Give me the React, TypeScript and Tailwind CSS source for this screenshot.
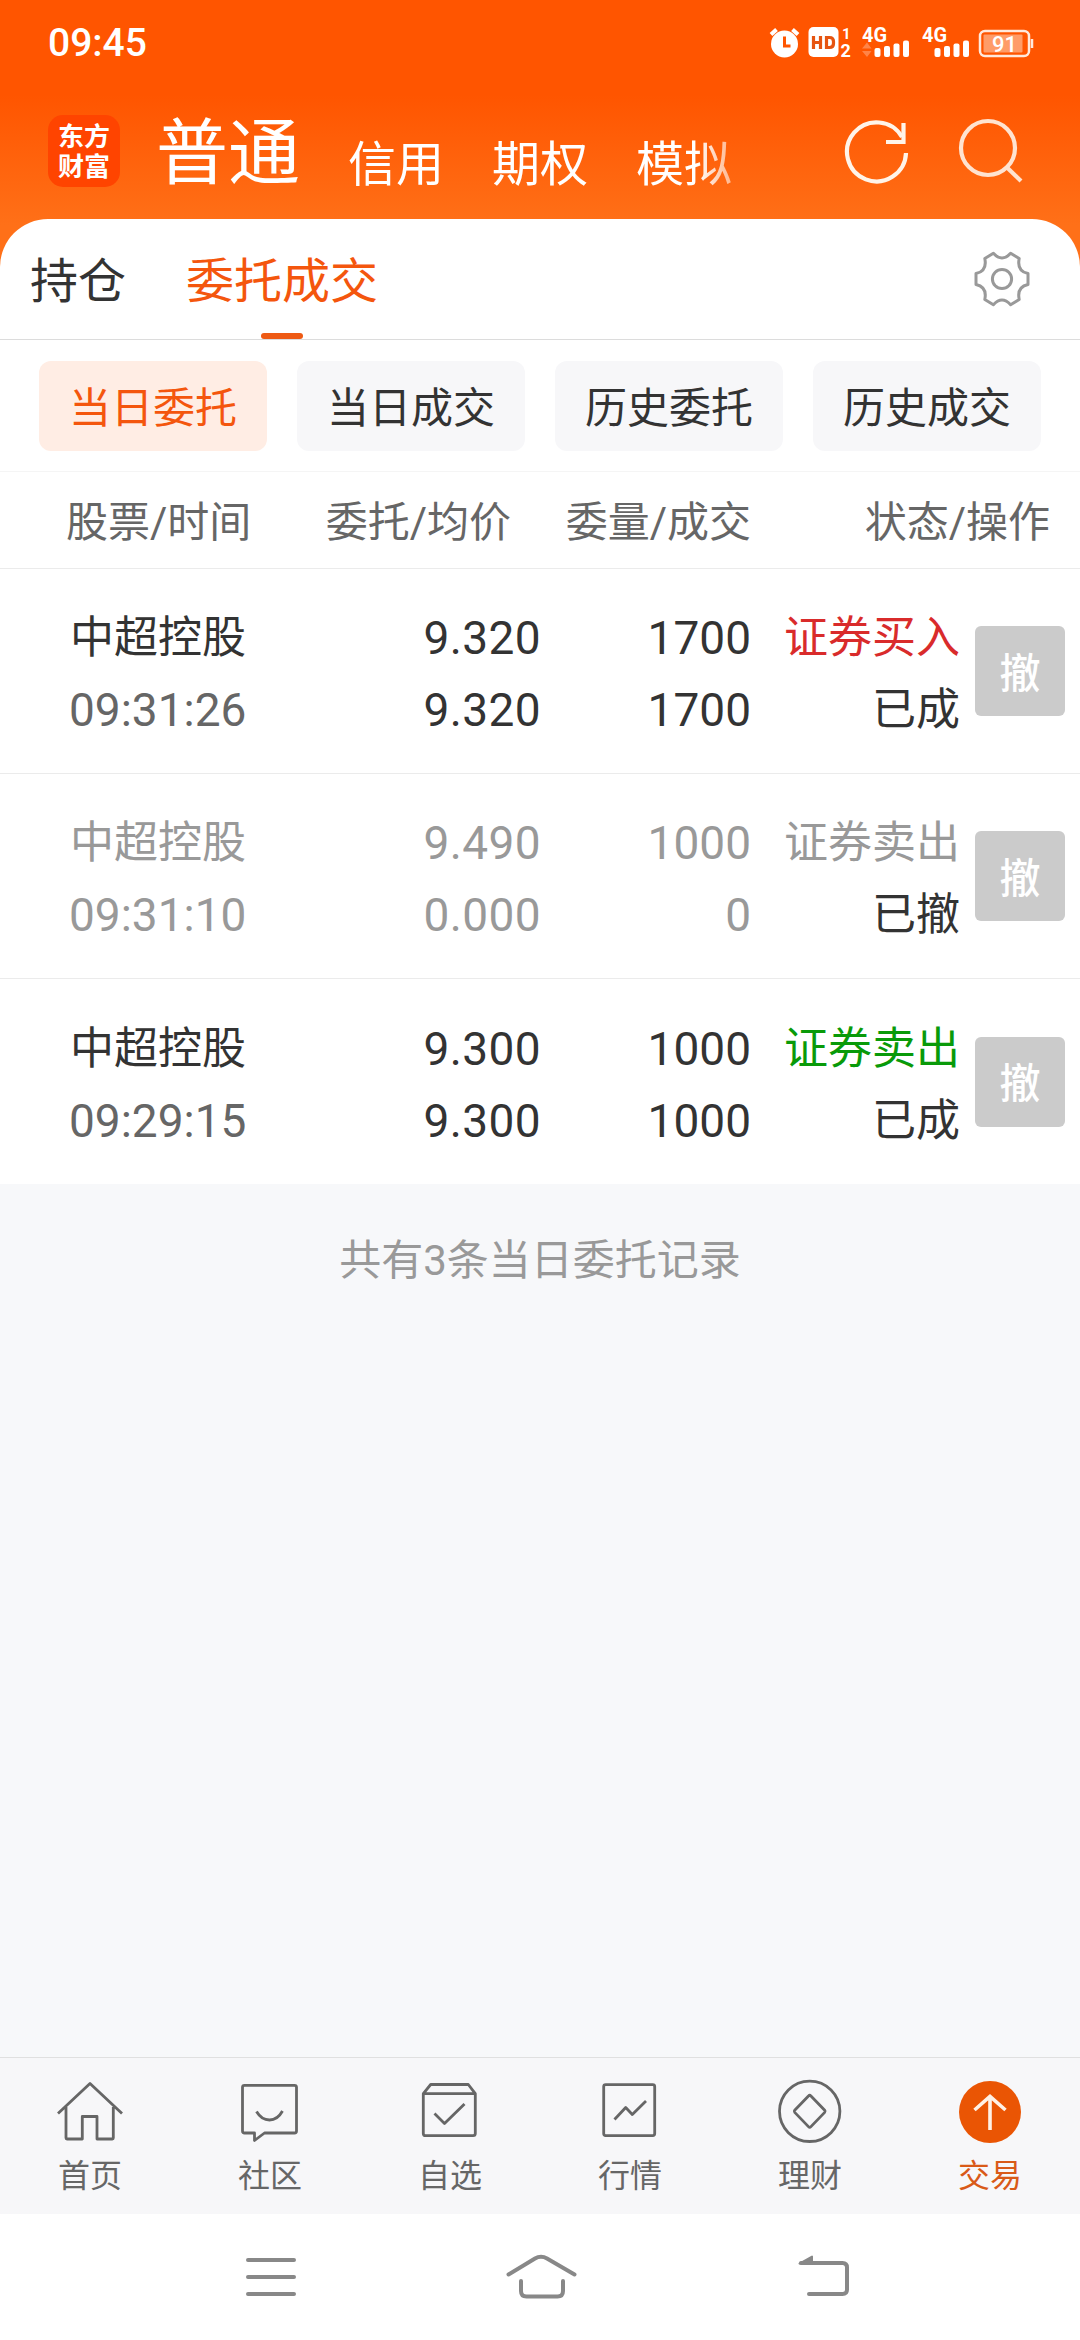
import {useState} from 'react';
import type {ReactNode} from 'react';

type Order = {
  name: string;
  time: string;
  price: string;
  avgPrice: string;
  amount: string;
  filled: string;
  side: string;
  sideColor: string;
  status: string;
  cancelled?: boolean;
};

const accounts = ['普通', '信用', '期权', '模拟'];
const filters = ['当日委托', '当日成交', '历史委托', '历史成交'];

const orders: Order[] = [
  {name: '中超控股', time: '09:31:26', price: '9.320', avgPrice: '9.320', amount: '1700', filled: '1700', side: '证券买入', sideColor: 'text-[#d92b2b]', status: '已成'},
  {name: '中超控股', time: '09:31:10', price: '9.490', avgPrice: '0.000', amount: '1000', filled: '0', side: '证券卖出', sideColor: 'text-[#999999]', status: '已撤', cancelled: true},
  {name: '中超控股', time: '09:29:15', price: '9.300', avgPrice: '9.300', amount: '1000', filled: '1000', side: '证券卖出', sideColor: 'text-[#099a09]', status: '已成'}
];

function Signal({roaming}: {roaming?: boolean}) {
  return (
    <svg viewBox="0 0 48 36" className="h-9 w-12" fill="#fff">
      <text x="0" y="18" fontSize="20" fontWeight="700" fontFamily="Roboto, sans-serif" textLength="25" lengthAdjust="spacingAndGlyphs">
        4G
      </text>
      {roaming ? <path d="M0 24.500 5 18.500l4.500 6zM0 27h9.500L5 33z" opacity="0.28" /> : null}
      <rect x="12.500" y="24" width="6" height="9" rx="2" />
      <rect x="22" y="22" width="6" height="11" rx="2" />
      <rect x="31.500" y="19.500" width="6" height="13.500" rx="2" />
      <rect x="41" y="16.500" width="6" height="16.500" rx="2" />
    </svg>
  );
}

function StatusBar() {
  return (
    <div className="flex h-[84px] items-center justify-between pl-12 pr-[46px]">
      <span className="pt-0.5 text-[39px] font-medium leading-none">09:45</span>
      <div className="flex items-center">
        <svg viewBox="0 0 32 32" className="mr-2 h-8 w-8">
          <circle cx="16.500" cy="18" r="13.500" fill="#fff" />
          <path d="M3 8.500 8.500 3.500M24.500 3.500l5.500 5" stroke="#fff" strokeWidth="4" />
          <path d="M16.500 10.500v9.500H22.500" stroke="#ff5500" strokeWidth="3" fill="none" />
        </svg>
        <svg viewBox="0 0 46 40" className="mr-2 h-10 w-[46px]">
          <rect x="0.500" y="5" width="30" height="30" rx="5" fill="#fff" />
          <path d="M5.500 14v13M12.500 14v13M5.500 20.500h7M18.500 15.500h3q4 0 4 4v2q0 4-4 4h-3z" stroke="#e65410" strokeWidth="3.200" fill="none" />
          <text x="34" y="16.500" fontSize="15" fontWeight="700" fontFamily="Roboto, sans-serif" fill="#fff">
            1
          </text>
          <text x="32.500" y="34.500" fontSize="18" fontWeight="700" fontFamily="Roboto, sans-serif" fill="#fff">
            2
          </text>
        </svg>
        <div className="mr-3 flex">
          <Signal roaming />
        </div>
        <div className="mr-2 flex">
          <Signal />
        </div>
        <svg viewBox="0 0 56 32" className="h-8 w-14">
          <rect x="2" y="5" width="49" height="25" rx="5" stroke="#ffe9dc" strokeWidth="2.500" fill="none" />
          <rect x="5.500" y="8.500" width="39" height="18" rx="1" fill="#ff9c68" />
          <path d="M54 13v9" stroke="#ffe9dc" strokeWidth="2.500" />
          <text x="26.500" y="25.500" fontSize="22" fontWeight="500" textAnchor="middle" fontFamily="Roboto, sans-serif" fill="#fff">
            91
          </text>
        </svg>
      </div>
    </div>
  );
}

function AccountBar() {
  return (
    <div className="flex h-[135px] items-start pl-12 pr-[55px] pt-[31px]">
      <div className="flex h-[72px] w-[72px] flex-col items-center justify-center rounded-[15px] bg-[#ff4400] pt-0.5 text-[26px] font-bold leading-[30px]">
        <span>东方</span>
        <span>财富</span>
      </div>
      <div className="ml-9 flex h-[84px] w-[640px] items-start gap-12 whitespace-nowrap text-5xl [mask-image:linear-gradient(to_right,#000_540px,transparent_615px)]">
        {accounts.map((account, index) => (
          <span key={account} className={index === 0 ? 'pt-[3px] text-[72px] leading-[72px]' : 'pt-5 leading-[60px]'}>
            {account}
          </span>
        ))}
      </div>
      <svg viewBox="0 0 72 72" className="ml-auto h-[72px] w-[72px] shrink-0" fill="none" stroke="#fff4e9" strokeWidth="4.200">
        <path d="M65 38a29.500 29.500 0 1 1-4-16" />
        <path d="M62.500 8v19H45" />
      </svg>
      <svg viewBox="0 0 72 72" className="ml-10 h-[72px] w-[72px] shrink-0" fill="none" stroke="#ffe3d0" strokeWidth="4.200">
        <circle cx="35" cy="33" r="27" />
        <path d="M54 52.500l14 13.500" />
      </svg>
    </div>
  );
}

function SectionTabs() {
  return (
    <div className="flex h-[121px] items-center rounded-t-[48px] border-b border-[#dcdcdc] bg-white pl-[30px] pr-12 text-5xl">
      <span className="pt-1.5">持仓</span>
      <div className="relative ml-[60px] flex h-full items-center text-[#f4560d]">
        <span className="pt-1.5">委托成交</span>
        <i className="absolute bottom-0 left-1/2 h-1.5 w-[42px] -translate-x-1/2 rounded-full bg-[#ee5a14]" />
      </div>
      <svg viewBox="-30 -30 60 60" className="ml-auto h-[60px] w-[60px]" fill="none" stroke="#999999" strokeWidth="3" strokeLinejoin="round">
        <path d="M-8.600-25.700Q0-16.300 8.600-25.700L17.200-20.500Q14.600-8 26-5.500V5.500Q14.600 8 17.200 20.500L8.600 25.700Q0 16.300-8.600 25.700L-17.200 20.500Q-14.600 8-26 5.500V-5.500Q-14.600-8-17.200-20.500Z" />
        <circle r="9.600" />
      </svg>
    </div>
  );
}

function Filters() {
  const [active, setActive] = useState(filters[0]);

  return (
    <div className="grid h-[132px] grid-cols-4 items-center gap-[30px] border-b border-[#f5f5f5] bg-white px-[39px]">
      {filters.map((filter) => (
        <button
          key={filter}
          type="button"
          onClick={() => setActive(filter)}
          className={`h-[90px] rounded-xl pt-1.5 text-[42px] leading-none ${filter === active ? 'bg-[#ffede4] text-[#f4560d]' : 'bg-[#f7f7f9]'}`}
        >
          {filter}
        </button>
      ))}
    </div>
  );
}

function OrderRow({order}: {order: Order}) {
  const tone = order.cancelled ? 'text-[#999999]' : 'text-[#333333]';

  return (
    <div className={`flex h-[205px] items-center border-b border-[#ebebeb] pr-[15px] text-[46px] leading-[72px] last:border-b-0 ${tone}`}>
      <div className="w-[270px] pl-[70px] pt-1.5">
        <p className="text-[44px]">{order.name}</p>
        <p className={order.cancelled ? '-ml-px' : '-ml-px text-[#666666]'}>{order.time}</p>
      </div>
      <div className="w-[271px] pt-1.5 text-right tracking-[0.4px]">
        <p>{order.price}</p>
        <p>{order.avgPrice}</p>
      </div>
      <div className="w-[210px] pt-1.5 text-right">
        <p>{order.amount}</p>
        <p>{order.filled}</p>
      </div>
      <div className="w-[209px] pt-1.5 text-right text-[44px]">
        <p className={order.sideColor}>{order.side}</p>
        <p className="text-[#333333]">{order.status}</p>
      </div>
      <button type="button" className="ml-auto h-[90px] w-[90px] rounded-md bg-[#cbcbcb] pt-1.5 text-[41px] font-medium leading-none text-white">
        撤
      </button>
    </div>
  );
}

function TabIcon({children}: {children: ReactNode}) {
  return (
    <svg viewBox="0 0 72 72" className="h-[72px] w-[72px]" fill="none" stroke="#666666" strokeWidth="2.800" strokeLinejoin="round">
      {children}
    </svg>
  );
}

const tabs = [
  {
    label: '首页',
    icon: (
      <TabIcon>
        <path d="M4 38.500 36 8.500l32 30M12 32v31q0 1 1 1h15.300V41.500H43V64h15.300q1 0 1-1V32" />
      </TabIcon>
    )
  },
  {
    label: '社区',
    icon: (
      <TabIcon>
        <path d="M10.500 10.300h50q2 0 2 2V56q0 2-2 2H30.500L20.500 65.500V58h-10q-2 0-2-2V12.300q0-2 2-2z" />
        <path d="M22.500 36.500q5 8.500 13 8.500t13-9" />
      </TabIcon>
    )
  },
  {
    label: '自选',
    icon: (
      <TabIcon>
        <path d="M9.300 18.700 16.700 9.500h37.600l7 9.200V58.500q0 2.200-2.200 2.200H11.500q-2.200 0-2.200-2.200zh52" />
        <path d="M20.500 38.500l10 10 20-19.500" />
      </TabIcon>
    )
  },
  {
    label: '行情',
    icon: (
      <TabIcon>
        <rect x="9.700" y="9.600" width="51" height="51" rx="2" />
        <path d="M20.500 44.500 31.700 32.500l6.600 7L52 26" />
      </TabIcon>
    )
  },
  {
    label: '理财',
    icon: (
      <TabIcon>
        <circle cx="35.700" cy="36.300" r="30.200" />
        <path d="M36.700 20.700 50.700 35.200q1 1.100 0 2.200L36.700 51.900q-1 1.100-2 0L20.700 37.400q-1-1.100 0-2.200L34.700 20.700q1-1.100 2 0z" />
      </TabIcon>
    )
  },
  {
    label: '交易',
    active: true,
    icon: (
      <svg viewBox="0 0 72 72" className="h-[72px] w-[72px]" fill="none" stroke="#fff1e6" strokeWidth="3.600">
        <circle cx="36" cy="37" r="31" fill="#ea5504" stroke="none" />
        <path d="M36 21v34M20.500 35 36 21.500 51.500 35" />
      </svg>
    )
  }
];

function SystemNav() {
  return (
    <div className="grid h-[126px] grid-cols-3 items-center justify-items-center bg-white pl-[136px] pr-[134px]">
      <svg viewBox="0 0 100 60" className="h-[60px] w-[100px]" stroke="#888888" strokeWidth="4" strokeLinecap="round">
        <path d="M27 13h46M27 30h46M27 47h46" />
      </svg>
      <svg viewBox="0 0 100 60" className="h-[60px] w-[100px]" fill="none" stroke="#888888" strokeWidth="4" strokeLinecap="round">
        <path d="M17.500 27.500 44 11.500Q50 8 56 11.500L83.500 27.500M30 34v10q0 5.500 5.500 5.500h31q5.500 0 5.500-5.500V34" />
      </svg>
      <svg viewBox="0 0 100 60" className="h-[60px] w-[100px]" fill="none" stroke="#888888" strokeWidth="4" strokeLinecap="round">
        <path d="M40 16h41.500q4.500 0 4.500 4.500v22q0 4.500-4.500 4.500H48" />
        <path d="M38.500 16.500 51 9.500v7z" fill="#888888" strokeWidth="2" strokeLinejoin="round" />
      </svg>
    </div>
  );
}

export default function App() {
  return (
    <main className="flex h-[2340px] w-[1080px] flex-col overflow-hidden bg-[#f7f8fa] font-[Roboto,'Noto_Sans_CJK_SC',sans-serif] text-[#333333]">
      <header className="bg-[linear-gradient(to_bottom,#ff5500_95px,#ff7018_225px)]">
        <div className="text-white">
          <StatusBar />
          <AccountBar />
        </div>
        <SectionTabs />
      </header>

      <Filters />

      <div className="flex h-[97px] items-center border-b border-[#ebebeb] bg-white pr-[30px] pt-1 text-[42px] text-[#666666]">
        <span className="w-[270px] pl-[66px]">股票/时间</span>
        <span className="w-[241px] text-right">委托/均价</span>
        <span className="w-[240px] text-right">委量/成交</span>
        <span className="ml-auto">状态/操作</span>
      </div>

      <section className="bg-white">
        {orders.map((order) => (
          <OrderRow key={order.time} order={order} />
        ))}
      </section>

      <p className="flex-1 pt-[47px] text-center text-[42px] leading-[60px] text-[#999999]">共有3条当日委托记录</p>

      <nav className="grid h-[157px] grid-cols-6 border-t border-[#e0e0e0] bg-[#f7f7f9] pt-[17px]">
        {tabs.map((tab) => (
          <div key={tab.label} className={`flex flex-col items-center text-[32px] leading-[58px] ${tab.active ? 'text-[#d95a18]' : 'text-[#666666]'}`}>
            {tab.icon}
            <span>{tab.label}</span>
          </div>
        ))}
      </nav>
      <SystemNav />
    </main>
  );
}
